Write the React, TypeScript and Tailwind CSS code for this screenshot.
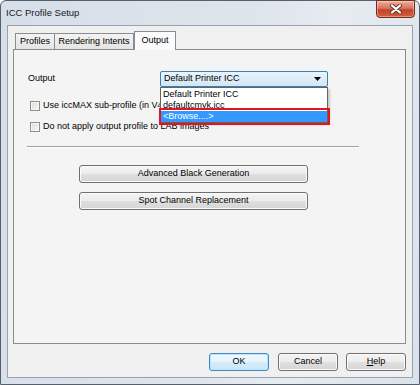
import React from "react";

function Button({ children, className = "", isDefault = false }: { children: React.ReactNode; className?: string; isDefault?: boolean }) {
  const look = isDefault
    ? "border-[#3c8cc8] bg-[linear-gradient(#f2f9fe,#e4f3fc_50%,#d6ecfa_50%,#c9e6f8)] shadow-[inset_0_0_0_1px_#bfe4fa]"
    : "border-[#707070] bg-[linear-gradient(#f4f4f4,#ececec_50%,#e0e0e0_50%,#d5d5d5)] shadow-[inset_0_0_0_1px_#fbfbfb]";
  return (
    <div className={`h-[18px] rounded-[3px] border flex items-center justify-center ${look} ${className}`}>
      {children}
    </div>
  );
}

function Checkbox({ label }: { label: string }) {
  return (
    <div className="h-[12px] flex items-center">
      <div className="w-[10px] h-[10px] shrink-0 border border-[#8f8f8f] bg-[linear-gradient(135deg,#d8d8d8,#fafafa)] shadow-[inset_0_0_0_1px_#f6f6f6]" />
      <span className="ml-[3px] whitespace-nowrap">{label}</span>
    </div>
  );
}

function CloseButton() {
  return (
    <div className="absolute right-[4px] top-[-1px] w-[39px] h-[18px] rounded-b-[4px] border border-[#7a2a1a] bg-[linear-gradient(#eab0a0,#d9745c_45%,#c4432a_55%,#d0603f)] flex items-center justify-center shadow-[inset_0_0_0_1px_rgba(255,255,255,0.35)]">
      <svg width="12" height="10" viewBox="0 0 12 10">
        <path d="M2 1.5 L10 8.5 M10 1.5 L2 8.5" stroke="#5a3a30" strokeWidth="4" strokeLinecap="round" />
        <path d="M2 1.5 L10 8.5 M10 1.5 L2 8.5" stroke="#ffffff" strokeWidth="2.2" strokeLinecap="round" />
      </svg>
    </div>
  );
}

export default function App() {
  return (
    <div className="w-[420px] h-[385px] bg-white">
      <div className="relative w-[420px] h-[385px] rounded-t-[6px] border border-[#56606c] bg-[linear-gradient(100deg,#d6dee8,#dfe5ec_55%,#e8ecf1_70%,#dbe2ea)] font-['Liberation_Sans',sans-serif] text-[9px] text-black flex flex-col">
        {/* title bar */}
        <div className="h-[24px] flex items-center pl-[5px] text-[9.5px] text-[#1a1a1a]">ICC Profile Setup</div>
        <CloseButton />

        {/* client area */}
        <div className="mx-[6px] mb-[6px] flex-1 border border-[#97a3b0] bg-[#f0f0f0] flex flex-col">
          {/* tabs */}
          <div className="mt-[5px] ml-[7px] h-[18px] flex items-end">
            <div className="w-[40px] h-[16px] border border-b-0 border-[#898c95] bg-[linear-gradient(#f3f3f3,#e4e4e4)] flex items-center justify-center">
              Profiles
            </div>
            <div className="w-[79px] h-[16px] border border-l-0 border-b-0 border-[#898c95] bg-[linear-gradient(#f3f3f3,#e4e4e4)] flex items-center justify-center">
              Rendering Intents
            </div>
            <div className="relative z-10 w-[42px] h-[19px] -mb-[1px] border border-b-0 border-[#898c95] bg-[#fbfbfb] flex items-center justify-center pb-[1px]">
              Output
            </div>
          </div>

          {/* tab page */}
          <div className="ml-[5px] w-[393px] h-[295px] border border-[#898c95] bg-[#f4f4f4] flex flex-col pl-[14px] pt-[21px]">
            <div className="h-[16px] flex items-center">
              <span className="w-[132px]">Output</span>
              <div className="relative w-[168px] h-[16px]">
                <div className="w-full h-full rounded-[2px] border border-[#3c7fb1] bg-[linear-gradient(#e9f3fb,#d3e6f5)] flex items-center pl-[3px] pr-[6px]">
                  <span className="flex-1">Default Printer ICC</span>
                  <svg width="7" height="4" viewBox="0 0 7 4">
                    <path d="M0 0 H7 L3.5 4 Z" fill="#000" />
                  </svg>
                </div>
                {/* open list */}
                <div className="absolute left-0 top-[16px] z-20 w-[168px] border border-[#646464] bg-white shadow-[2px_2px_2px_rgba(0,0,0,0.18)] pt-[1px]">
                  <div className="h-[11px] flex items-center pl-[2px]">Default Printer ICC</div>
                  <div className="h-[11px] flex items-center pl-[2px]">defaultcmyk.icc</div>
                  <div className="relative h-[11px] flex items-center pl-[2px] bg-[#3399ff] text-white">
                    &lt;Browse....&gt;
                    <div className="absolute -left-[2px] -right-[3px] -top-[3px] -bottom-[3px] border-2 border-[#e5141c]" />
                  </div>
                </div>
              </div>
            </div>

            <div className="mt-[13px] ml-[2px] flex flex-col gap-[9px]">
              <Checkbox label="Use iccMAX sub-profile (in V4 or later)" />
              <Checkbox label="Do not apply output profile to LAB images" />
            </div>

            <div className="mt-[13px] ml-[-1px] w-[332px] h-[2px] border-t border-[#a0a0a0] border-b border-b-white" />

            <Button className="mt-[17px] ml-[51px] w-[229px]">Advanced Black Generation</Button>
            <Button className="mt-[9px] ml-[51px] w-[229px]">Spot Channel Replacement</Button>
          </div>

          {/* dialog buttons */}
          <div className="mt-[9px] h-[18px] flex justify-end pr-[6px]">
            <Button isDefault className="w-[60px]">OK</Button>
            <Button className="ml-[9px] w-[60px]">Cancel</Button>
            <Button className="ml-[8px] w-[60px]">
              <span><span className="underline">H</span>elp</span>
            </Button>
          </div>
        </div>
      </div>
    </div>
  );
}
